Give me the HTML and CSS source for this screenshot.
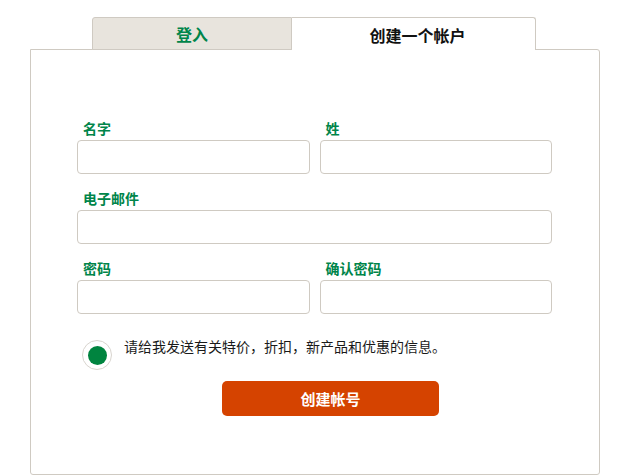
FILE: index.html
```html
<!DOCTYPE html>
<html lang="zh-CN">
<head>
<meta charset="utf-8">
<title>创建一个帐户</title>
<link rel="stylesheet" href="styles.css">
</head>
<body>
<div class="page">
  <div class="tabs">
    <div class="tab tab-signin">登入</div>
    <div class="tab tab-create">创建一个帐户</div>
  </div>
  <div class="panel">
    <form class="form">
      <div class="row two">
        <div class="field">
          <label class="label">名字</label>
          <div class="input"></div>
        </div>
        <div class="field">
          <label class="label">姓</label>
          <div class="input"></div>
        </div>
      </div>
      <div class="row">
        <div class="field">
          <label class="label">电子邮件</label>
          <div class="input"></div>
        </div>
      </div>
      <div class="row two">
        <div class="field">
          <label class="label">密码</label>
          <div class="input"></div>
        </div>
        <div class="field">
          <label class="label">确认密码</label>
          <div class="input"></div>
        </div>
      </div>
      <div class="optin">
        <span class="radio"><span class="dot"></span></span>
        <span class="optin-text">请给我发送有关特价，折扣，新产品和优惠的信息。</span>
      </div>
      <div class="actions">
        <button type="button" class="submit">创建帐号</button>
      </div>
    </form>
  </div>
</div>
</body>
</html>
```
FILE: styles.css
```css
* { box-sizing: border-box; }
html, body { margin: 0; padding: 0; background: #fff; }
body {
  font-family: "Noto Sans CJK SC", "Noto Sans", sans-serif;
  color: #222;
}
.page { padding-top: 17px; }
.tabs {
  display: flex;
  margin-left: 92px;
  margin-bottom: -1px;
  position: relative;
  z-index: 1;
}
.tab {
  height: 33px;
  font-size: 16px;
  font-weight: bold;
  padding-top: 2px;
  text-align: center;
}
.tab-signin {
  width: 200px;
  background: #e8e4dd;
  border: 1px solid #cfcac2;
  border-radius: 3px 0 0 0;
  color: #00854a;
  line-height: 29px;
}
.tab-create {
  width: 244px;
  background: #fff;
  border: 1px solid #cfcac2;
  border-left: none;
  border-bottom: none;
  border-radius: 0 3px 0 0;
  color: #111;
  line-height: 30px;
  padding-left: 8px;
}
.panel {
  margin-left: 30px;
  width: 570px;
  height: 426px;
  border: 1px solid #cfcac2;
  border-radius: 0 3px 3px 3px;
  padding: 70px 47px 0 46px;
}
.form { display: flex; flex-direction: column; }
.row { margin-bottom: 16px; }
.row.two {
  display: grid;
  grid-template-columns: 1fr 1fr;
  column-gap: 10px;
}
.field { display: flex; flex-direction: column; }
.label {
  font-size: 14px;
  font-weight: bold;
  color: #00854a;
  line-height: 17px;
  height: 17px;
  padding-left: 6px;
  margin-bottom: 3px;
}
.input {
  height: 34px;
  border: 1px solid #cfcac2;
  border-radius: 4px;
  background: #fff;
}
.optin {
  display: flex;
  align-items: flex-start;
  margin-left: 5px;
  margin-top: 10px;
}
.radio {
  width: 30px;
  height: 30px;
  border: 1px solid #d9d5cf;
  border-radius: 50%;
  display: flex;
  align-items: center;
  justify-content: center;
  flex: none;
}
.dot {
  width: 19px;
  height: 19px;
  border-radius: 50%;
  background: #00843f;
}
.optin-text {
  margin-left: 12px;
  font-size: 14px;
  line-height: 18px;
  margin-top: -3px;
  color: #1a1a1a;
}
.actions { margin-top: 11px; padding-left: 145px; }
.submit {
  width: 217px;
  height: 35px;
  border: none;
  border-radius: 5px;
  background: #d54300;
  color: #fff;
  font-family: "Noto Sans CJK SC", "Noto Sans", sans-serif;
  font-size: 15px;
  font-weight: bold;
  padding: 0;
  margin: 0;
}
```
